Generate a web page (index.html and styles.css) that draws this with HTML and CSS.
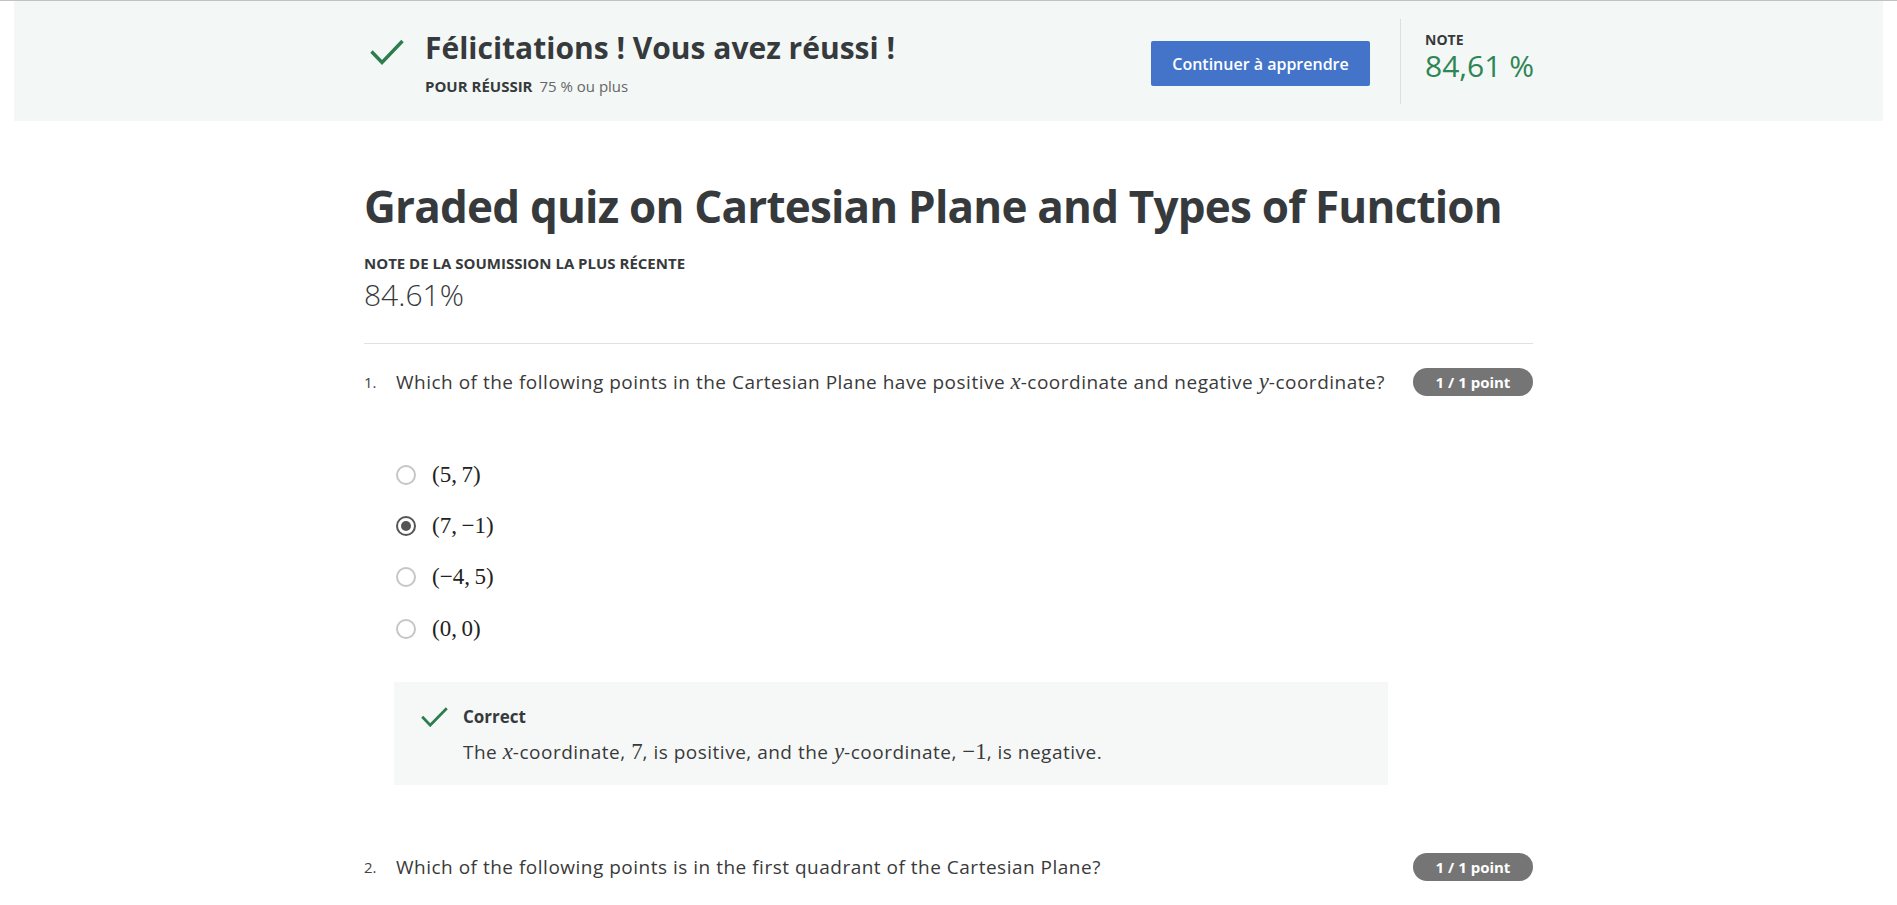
FILE: index.html
```html
<!DOCTYPE html>
<html lang="fr">
<head>
<meta charset="utf-8">
<title>Graded quiz on Cartesian Plane and Types of Function</title>
<link rel="stylesheet" href="styles.css">
</head>
<body>
<div class="topline"></div>
<section class="banner">
  <div class="banner-inner">
    <div class="result">
      <svg class="result-check" width="34" height="26" viewBox="0 0 34 26"><path d="M1.5 12.5 L12 23.5 L32.5 2" fill="none" stroke="#2e7d4f" stroke-width="3.4"/></svg>
      <div class="result-text">
        <h2 class="result-title">Félicitations ! Vous avez réussi !</h2>
        <p class="result-sub"><span class="result-sub-label">POUR RÉUSSIR</span> 75 % ou plus</p>
      </div>
    </div>
    <button class="continue-btn" type="button">Continuer à apprendre</button>
    <div class="grade">
      <div class="grade-label">NOTE</div>
      <div class="grade-value">84,61 %</div>
    </div>
  </div>
</section>

<main class="content">
  <h1 class="quiz-title">Graded quiz on Cartesian Plane and Types of Function</h1>
  <div class="recent-label">NOTE DE LA SOUMISSION LA PLUS RÉCENTE</div>
  <div class="recent-score">84.61%</div>
  <hr class="divider">

  <div class="question">
    <div class="q-head">
      <span class="q-num">1.</span>
      <span class="q-text">Which of the following points in the Cartesian Plane have positive <span class="mi">x</span>-coordinate and negative <span class="mi">y</span>-coordinate?</span>
      <span class="q-badge">1 / 1 point</span>
    </div>
    <ul class="options">
      <li class="option"><span class="radio"></span><span class="math">(5,&#8201;7)</span></li>
      <li class="option"><span class="radio radio-checked"></span><span class="math">(7,&#8201;−1)</span></li>
      <li class="option"><span class="radio"></span><span class="math">(−4,&#8201;5)</span></li>
      <li class="option"><span class="radio"></span><span class="math">(0,&#8201;0)</span></li>
    </ul>
    <div class="feedback">
      <div class="fb-head">
        <svg class="fb-check" width="27" height="20" viewBox="0 0 27 20"><path d="M1.2 9.8 L9.2 18.2 L25.8 1.2" fill="none" stroke="#2e7d4f" stroke-width="2.8"/></svg>
        <span class="fb-title">Correct</span>
      </div>
      <p class="fb-text">The <span class="mi">x</span>-coordinate, <span class="mn">7</span>, is positive, and the <span class="mi">y</span>-coordinate, <span class="mn">−1</span>, is negative.</p>
    </div>
  </div>

  <div class="question question-next">
    <div class="q-head">
      <span class="q-num">2.</span>
      <span class="q-text">Which of the following points is in the first quadrant of the Cartesian Plane?</span>
      <span class="q-badge">1 / 1 point</span>
    </div>
  </div>
</main>
</body>
</html>
```

FILE: styles.css
```css
* { box-sizing: border-box; }

html, body {
  margin: 0;
  padding: 0;
  background: #ffffff;
  font-family: "Open Sans", "Noto Sans", sans-serif;
  color: #373a3c;
}

.topline {
  height: 1px;
  background: #c2c2c2;
}

.banner {
  margin: 0 14px;
  background: #f3f8f6;
  padding: 18px 0 17px;
}

.banner-inner {
  width: 1169px;
  margin: 0 auto;
  display: flex;
  align-items: center;
  height: 85px;
}

.result {
  flex: 1;
  display: flex;
  align-items: flex-start;
  padding-top: 2px;
}

.result-check {
  margin: 10px 0 0 6px;
  flex: none;
}

.result-text {
  margin-left: 21px;
}

.result-title {
  margin: 0;
  font-size: 30px;
  line-height: 38px;
  font-weight: 700;
  color: #373a3c;
}

.result-sub {
  margin: 9px 0 0;
  font-size: 15px;
  line-height: 20px;
  color: #666;
}

.result-sub-label {
  font-weight: 700;
  color: #373a3c;
  margin-right: 3px;
}

.continue-btn {
  width: 219px;
  height: 45px;
  margin-top: 4px;
  border: none;
  border-radius: 2px;
  background: #4474c9;
  color: #fff;
  font-family: "Open Sans", sans-serif;
  font-size: 16px;
  font-weight: 600;
  padding: 0;
}

.grade {
  flex: none;
  width: 133px;
  margin-left: 30px;
  border-left: 1px solid #dcdfe0;
  padding-left: 24px;
  align-self: stretch;
  padding-top: 12px;
  white-space: nowrap;
}

.grade-label {
  font-size: 14px;
  line-height: 18px;
  font-weight: 700;
  color: #373a3c;
}

.grade-value {
  font-size: 30px;
  line-height: 34px;
  color: #2f8554;
}

.content {
  width: 1169px;
  margin: 59px auto 0;
}

.quiz-title {
  margin: 0;
  font-size: 44px;
  line-height: 52px;
  font-weight: 700;
  letter-spacing: -0.8px;
  color: #373a3c;
  white-space: nowrap;
}

.recent-label {
  margin-top: 21px;
  font-size: 15px;
  line-height: 20px;
  font-weight: 700;
  color: #373a3c;
}

.recent-score {
  margin-top: 2px;
  font-size: 30px;
  line-height: 40px;
  font-weight: 300;
  color: #373a3c;
}

.divider {
  margin: 28px 0 0;
  border: none;
  border-top: 1px solid #e1e1e1;
}

.question {
  padding-top: 24px;
}

.q-head {
  display: flex;
  align-items: center;
  min-height: 28px;
}

.q-num {
  width: 32px;
  flex: none;
  font-size: 15px;
  color: #444;
}

.q-text {
  flex: 1;
  font-size: 19px;
  line-height: 28px;
  letter-spacing: 0.5px;
  color: #3a3a3a;
}

.q-badge {
  flex: none;
  width: 120px;
  height: 28px;
  line-height: 28px;
  border-radius: 14px;
  background: #757575;
  color: #fff;
  text-align: center;
  font-size: 15px;
  font-weight: 700;
}

.mi {
  font-family: "Liberation Serif", "DejaVu Serif", serif;
  font-style: italic;
  font-size: 1.2em;
  line-height: 1;
  letter-spacing: 0;
}

.mn {
  font-family: "Liberation Serif", "DejaVu Serif", serif;
  font-size: 1.2em;
  line-height: 1;
  letter-spacing: 0;
}

.options {
  list-style: none;
  margin: 53px 0 0;
  padding: 0 0 0 32px;
}

.option {
  height: 51.4px;
  display: flex;
  align-items: center;
}

.radio {
  width: 20px;
  height: 20px;
  border-radius: 50%;
  border: 2px solid #c6c6c6;
  flex: none;
  display: flex;
  align-items: center;
  justify-content: center;
}

.radio-checked {
  border: 2px solid #555;
}

.radio-checked::after {
  content: "";
  width: 10px;
  height: 10px;
  border-radius: 50%;
  background: #555;
}

.math {
  margin-left: 16px;
  font-family: "Liberation Serif", "DejaVu Serif", serif;
  font-size: 23px;
  color: #222;
}

.feedback {
  margin: 27px 0 0 30px;
  width: 994px;
  height: 103px;
  background: #f6f8f8;
  padding: 23px 0 0 27px;
}

.fb-head {
  display: flex;
  align-items: center;
  height: 24px;
}

.fb-check {
  flex: none;
}

.fb-title {
  margin-left: 15px;
  font-size: 17px;
  font-weight: 700;
  color: #373a3c;
}

.fb-text {
  margin: 10px 0 0 42px;
  font-size: 19px;
  line-height: 26px;
  letter-spacing: 0.5px;
  color: #3a3a3a;
}

.question-next {
  padding-top: 68px;
}
```
